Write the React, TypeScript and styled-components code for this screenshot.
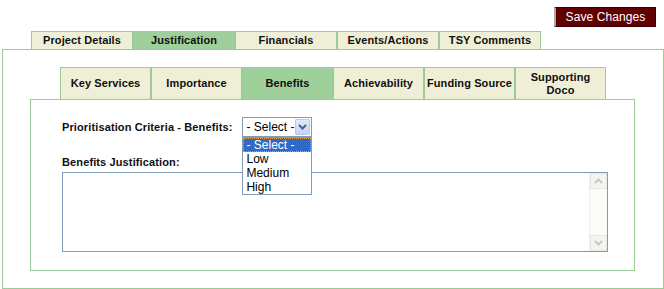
import React, { useState } from 'react';
import styled, { createGlobalStyle } from 'styled-components';

const GlobalStyle = createGlobalStyle`
  body {
    margin: 0;
    background: #ffffff;
    font-family: "Liberation Sans", Arial, sans-serif;
  }
`;

const Page = styled.div`
  width: 664px;
  height: 289px;
  display: flex;
  flex-direction: column;
`;

const TopBar = styled.div`
  display: flex;
  justify-content: flex-end;
  padding: 7px 8px 0 0;
  height: 20px;
`;

const SaveButton = styled.button`
  box-sizing: border-box;
  width: 102px;
  height: 20px;
  padding: 0 0 1px 0;
  background: #600000;
  border: 1px solid #3a0000;
  border-left: 2px solid #a8a8a8;
  color: #ffffff;
  font-family: "Liberation Sans", Arial, sans-serif;
  font-size: 12px;
  letter-spacing: 0.1px;
  cursor: pointer;
`;

const TabBar = styled.div<{ $left: number; $top: number }>`
  display: flex;
  margin-left: ${(p) => p.$left}px;
  margin-top: ${(p) => p.$top}px;
  position: relative;
  z-index: 1;
  margin-bottom: -1px;
`;

const Tab = styled.div<{ $active?: boolean; $width: number; $height: number }>`
  box-sizing: border-box;
  width: ${(p) => p.$width}px;
  height: ${(p) => p.$height}px;
  display: flex;
  align-items: center;
  justify-content: center;
  text-align: center;
  border: 1px solid #99cc99;
  background: ${(p) => (p.$active ? '#9fcf9b' : '#efefd7')};
  font-family: "Liberation Sans", Arial, sans-serif;
  font-weight: bold;
  font-size: 11px;
  line-height: 13px;
  letter-spacing: 0.1px;
  color: #101010;
  cursor: pointer;
`;

const Panel = styled.div<{ $mx: string }>`
  box-sizing: border-box;
  border: 1px solid #99cc99;
  margin: ${(p) => p.$mx};
  display: flex;
  flex-direction: column;
`;

const OuterPanel = styled(Panel)`
  height: 240px;
  padding-top: 17px;
`;

const InnerPanel = styled(Panel)`
  height: 172px;
  padding: 17px 25px 0 31px;
`;

const FieldRow = styled.div`
  display: flex;
  align-items: center;
  height: 20px;
`;

const Label = styled.label`
  font-family: "Liberation Sans", Arial, sans-serif;
  font-weight: bold;
  font-size: 11px;
  letter-spacing: 0.12px;
  color: #101010;
`;

const SelectWrap = styled.div`
  position: relative;
  margin-left: 10px;
`;

const SelectBox = styled.div`
  box-sizing: border-box;
  width: 70px;
  height: 20px;
  border: 1px solid #7f9db9;
  display: flex;
  align-items: center;
  justify-content: space-between;
  padding: 1px 1px 1px 3px;
  background: #fff;
  font-size: 12px;
  color: #000;
`;

const ArrowButton = styled.span`
  box-sizing: border-box;
  width: 15px;
  height: 16px;
  border: 1px solid #b6c9f5;
  border-radius: 1px;
  background: linear-gradient(180deg, #dfe8fd 0%, #c3d4fb 100%);
  display: flex;
  align-items: center;
  justify-content: center;
`;

const DropList = styled.ul`
  position: absolute;
  top: 20px;
  left: 0;
  box-sizing: border-box;
  width: 70px;
  margin: 0;
  padding: 0;
  list-style: none;
  border: 1px solid #7f9db9;
  background: #fff;
  z-index: 5;
`;

const DropItem = styled.li<{ $selected?: boolean }>`
  box-sizing: border-box;
  height: 14px;
  line-height: 12px;
  padding-left: 2px;
  font-size: 12px;
  color: ${(p) => (p.$selected ? '#fff' : '#000')};
  background: ${(p) => (p.$selected ? '#316ac5' : 'transparent')};
  border: 1px dotted ${(p) => (p.$selected ? '#e6a23c' : 'transparent')};
`;

const SubLabel = styled(Label)`
  display: block;
  margin-top: 19px;
  height: 12px;
`;

const TextBox = styled.div`
  box-sizing: border-box;
  margin-top: 4px;
  width: 546px;
  height: 80px;
  border: 1px solid #7f9db9;
  display: flex;
`;

const TextArea = styled.div`
  flex: 1;
`;

const ScrollTrack = styled.div`
  width: 17px;
  display: flex;
  flex-direction: column;
  justify-content: space-between;
  background: #fbfbf8;
  border-left: 1px solid #f0f0ea;
`;

const ScrollButton = styled.div`
  box-sizing: border-box;
  width: 17px;
  height: 16px;
  border: 1px solid #e8e8e0;
  background: #f4f4f0;
  display: flex;
  align-items: center;
  justify-content: center;
`;

const outerTabs = ['Project Details', 'Justification', 'Financials', 'Events/Actions', 'TSY Comments'];
const innerTabs = ['Key Services', 'Importance', 'Benefits', 'Achievability', 'Funding Source', 'Supporting Doco'];
const options = ['- Select -', 'Low', 'Medium', 'High'];

const Chevron = ({ up, color }: { up?: boolean; color: string }) => (
  <svg width="9" height="6" viewBox="0 0 9 6">
    <path
      d={up ? 'M1 5 L4.5 1.5 L8 5' : 'M1 1 L4.5 4.5 L8 1'}
      fill="none"
      stroke={color}
      strokeWidth="2"
    />
  </svg>
);

export default function App() {
  const [outer, setOuter] = useState('Justification');
  const [inner, setInner] = useState('Benefits');

  return (
    <Page>
      <GlobalStyle />
      <TopBar>
        <SaveButton>Save Changes</SaveButton>
      </TopBar>
      <TabBar $left={31} $top={4}>
        {outerTabs.map((t) => (
          <Tab key={t} $width={102} $height={19} $active={t === outer} onClick={() => setOuter(t)}>
            {t}
          </Tab>
        ))}
      </TabBar>
      <OuterPanel $mx="0 0 0 2px">
        <TabBar $left={57} $top={0}>
          {innerTabs.map((t) => (
            <Tab key={t} $width={91} $height={33} $active={t === inner} onClick={() => setInner(t)}>
              {t === 'Supporting Doco' ? (
                <span>
                  Supporting
                  <br />
                  Doco
                </span>
              ) : (
                t
              )}
            </Tab>
          ))}
        </TabBar>
        <InnerPanel $mx="0 28px 0 27px">
          <FieldRow>
            <Label>Prioritisation Criteria - Benefits:</Label>
            <SelectWrap>
              <SelectBox>
                <span>- Select -</span>
                <ArrowButton>
                  <Chevron color="#4d6185" />
                </ArrowButton>
              </SelectBox>
              <DropList>
                {options.map((o, i) => (
                  <DropItem key={o} $selected={i === 0}>
                    {o}
                  </DropItem>
                ))}
              </DropList>
            </SelectWrap>
          </FieldRow>
          <SubLabel>Benefits Justification:</SubLabel>
          <TextBox>
            <TextArea />
            <ScrollTrack>
              <ScrollButton>
                <Chevron up color="#c8c8c0" />
              </ScrollButton>
              <ScrollButton>
                <Chevron color="#c8c8c0" />
              </ScrollButton>
            </ScrollTrack>
          </TextBox>
        </InnerPanel>
      </OuterPanel>
    </Page>
  );
}
